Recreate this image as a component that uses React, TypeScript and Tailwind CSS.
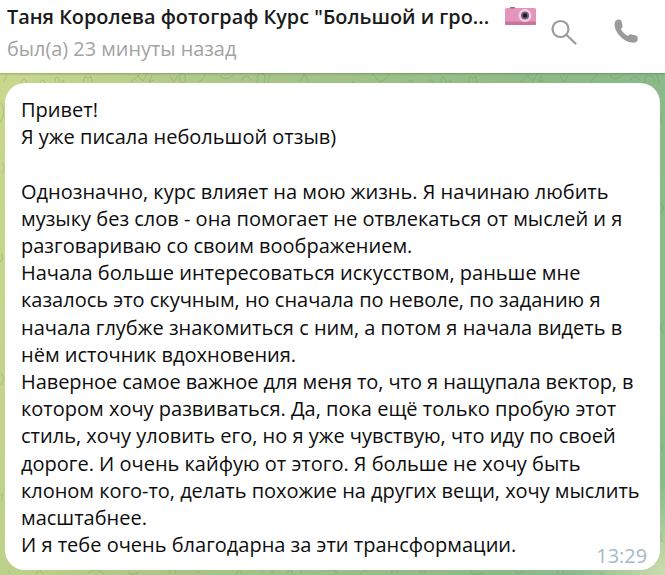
import React from "react";

const lines = [
  "Привет!",
  "Я уже писала небольшой отзыв)",
  "\u00a0",
  "Однозначно, курс влияет на мою жизнь. Я начинаю любить",
  "музыку без слов - она помогает не отвлекаться от мыслей и я",
  "разговариваю со своим воображением.",
  "Начала больше интересоваться искусством, раньше мне",
  "казалось это скучным, но сначала по неволе, по заданию я",
  "начала глубже знакомиться с ним, а потом я начала видеть в",
  "нём источник вдохновения.",
  "Наверное самое важное для меня то, что я нащупала вектор, в",
  "котором хочу развиваться. Да, пока ещё только пробую этот",
  "стиль, хочу уловить его, но я уже чувствую, что иду по своей",
  "дороге. И очень кайфую от этого. Я больше не хочу быть",
  "клоном кого-то, делать похожие на других вещи, хочу мыслить",
  "масштабнее.",
  "И я тебе очень благодарна за эти трансформации.",
];

function Camera() {
  return (
    <svg width="31" height="18" viewBox="0 0 31 18" className="ml-[16px] shrink-0 -translate-y-[1px]">
      <rect x="0" y="1" width="31" height="17" rx="1.5" fill="#e495bb" />
      <rect x="0" y="14.500" width="31" height="3.500" rx="1" fill="#c9749e" />
      <rect x="5" y="0" width="5" height="1.500" fill="#a8648a" />
      <circle cx="20" cy="8.500" r="6.500" fill="#f2cfe0" />
      <circle cx="20" cy="8.500" r="4" fill="#75607a" />
      <circle cx="20" cy="8.500" r="2.200" fill="#221d2a" />
    </svg>
  );
}

function Doodles() {
  return (
    <svg
      className="pointer-events-none absolute inset-0"
      width="665"
      height="502"
      viewBox="0 0 665 502"
      fill="none"
      stroke="#4f8a55"
      strokeOpacity="0.28"
      strokeWidth="1"
    >
      <path d="M3 10l4-8M21 10c1-5 5-5 6 0M40 10c1-4 4-4 5 0M55 10c0-8 4-8 5 0M62 10c0-3 2-4 2-1M83 10l2-7 3 3 3-3 1 7" />
      <path d="M131 9l8-7M137 2l6 6 4-7M152 2l-3 7 5-2M170 3l4 6 4-6M180 5a3 3 0 1 0 5 0 3 3 0 1 0-5 0M198 9c4-2 6-4 7-8" />
      <path d="M220 2c1 5 8 5 13 0M241 8c3-7 8-6 10 0M258 7a4 4 0 1 0 6 0 4 4 0 1 0-6 0M270 2l-2 7M300 9l4-8 5 8" />
      <path d="M352 9h2M372 1c3 2 5 5 7 8 5-1 8-4 10-8M408 10c1-4 4-4 5 0M428 10c1-4 4-4 5 0M441 10c0-8 4-8 5 0M449 10c0-3 2-4 2-1M468 10l2-7 3 3 3-3 1 7" />
      <path d="M521 9l8-7M527 2l6 6 4-7M542 2l-3 7 5-2M560 3l4 6 4-6M590 8c4-2 6-4 7-7M610 2c1 5 8 5 13 0M630 8c3-6 8-6 10 0M645 10a5 5 0 1 1 9 0M657 2l2 8" />
      <path d="M1 30c5 8 2 14-1 20M2 90c3 3 3 6 0 10M1 180c2 3 2 6-1 9M1 300c3 4 3 8 0 12M1 420c2 3 2 6 0 9" />
      <path d="M662 40c-2 4-2 8 1 11M661 130c3 3 3 7 0 10M662 250c-2 3-2 7 1 10M661 370c2 3 2 6 0 9M662 460c-2 3-2 6 1 9" />
      <path d="M8 498l3 3M36 501l3-5 4 5M88 500c5-4 10-4 16 1M128 499c3 3 7 3 11 0M170 501a3 3 0 1 1 5 0M196 499h4M236 501l3-5 3 5M262 500c0-3 2-4 3-4M270 500l2-4 2 4M287 501l3-5 3 5M300 497l2 4M322 497h14v4M360 501c2-3 5-4 8-3M392 501a3 3 0 1 1 5 0M420 500l3-4 3 4M470 499c5 3 10 3 14 0M514 498c3 3 7 3 10 0M558 501a3 3 0 1 1 5 0M600 499l4 2" />
    </svg>
  );
}

export default function App() {
  return (
    <div
      className="flex h-[575px] w-[665px] flex-col overflow-hidden bg-[radial-gradient(circle_at_100%_100%,#ccdcae_0,rgba(204,220,174,0)_90px),linear-gradient(100deg,#cbd98d_0%,#a6c488_38%,#8dba86_75%,#8abb8c_100%)]"
      style={{ fontFamily: '"Open Sans", sans-serif' }}
    >
      <header className="relative z-10 flex h-[73px] shrink-0 items-start justify-between bg-white pl-[7px] pr-[25px] shadow-[0_1px_2px_rgba(40,80,40,0.35)]">
        <div className="min-w-0 pt-[3px]">
          <div className="flex items-center">
            <span className="whitespace-nowrap text-[19.87px] leading-[28px] font-semibold text-[#1a1a1a]">
              Таня Королева фотограф Курс "Большой и гро...
            </span>
            <Camera />
          </div>
          <div className="mt-[4px] whitespace-nowrap text-[19.87px] leading-[28px] text-[#a3a3a3]">
            был(а) 23 минуты назад
          </div>
        </div>
        <div className="flex items-start gap-[37px] pt-[19px]">
          <svg width="26" height="26" viewBox="0 0 26 26" fill="none" stroke="#9a9a9a" strokeWidth="2.200">
            <circle cx="9.500" cy="10" r="8" />
            <path d="M15.500 16l9 8.500" strokeLinecap="round" />
          </svg>
          <svg width="26" height="26" viewBox="0 0 26 26" fill="#9a9a9a">
            <path d="M2 1.500C3.500 0 6.500 0 7.500 2L8.500 7C8.800 8.500 7.500 9.500 6.800 10C8.500 13 11 15.500 14 17C14.800 16 16 15 17.500 15.400L22 16.500C24 17.200 24 20 23.500 21.500C22.500 24 19 24 16 23.300C9 21.500 2.500 15 .8 8C.3 5.500 .5 3 2 1.500Z" />
          </svg>
        </div>
      </header>
      <main className="relative min-h-0 flex-1 px-[5px] pt-[10px] pb-[5px]">
        <Doodles />
        <div className="relative h-full rounded-[20px] bg-white pl-[16px] pt-[13px] text-[20px] leading-[27.2px] text-[#0d0d0d]">
          {lines.map((l, i) => (
            <div
              key={i}
              className={
                i === 10
                  ? "whitespace-nowrap tracking-[-0.07px]"
                  : i === 14
                    ? "whitespace-nowrap tracking-[-0.03px]"
                    : "whitespace-nowrap"
              }
            >
              {l}
            </div>
          ))}
          <span className="absolute right-[13px] bottom-[1px] text-[19.87px] leading-[27px] text-[#a5b9c9]">13:29</span>
        </div>
      </main>
    </div>
  );
}
